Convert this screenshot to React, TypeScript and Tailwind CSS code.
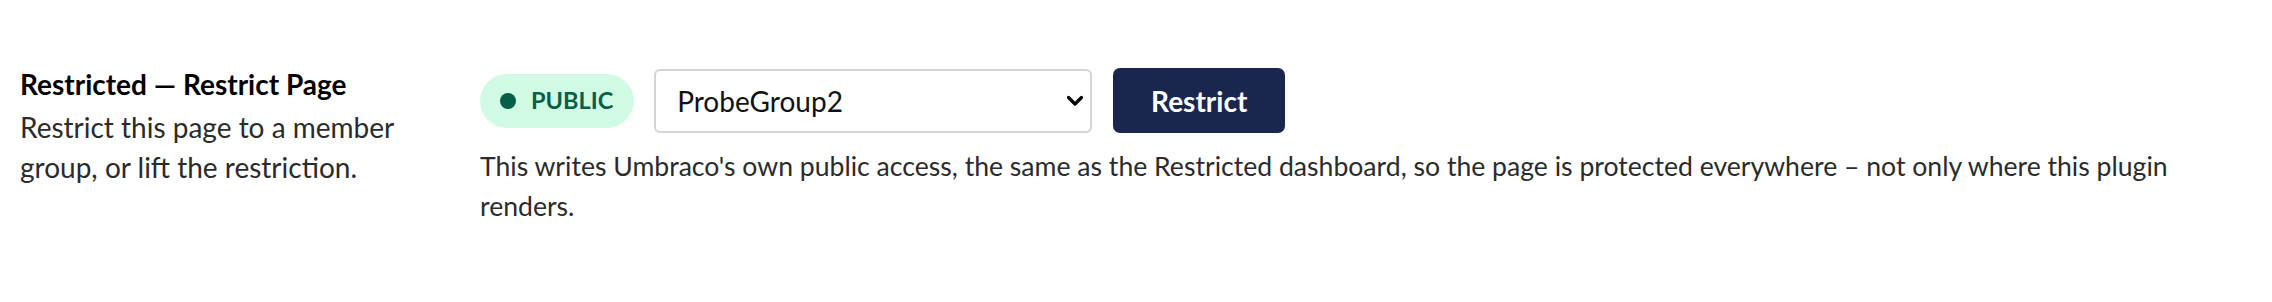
import React, { useState } from 'react';

const font = { fontFamily: 'Lato, "Noto Sans", sans-serif' };

function StatusPill({ label }: { label: string }) {
  return (
    <span className="inline-flex h-[54px] items-center gap-[15px] rounded-full bg-[#d1fae5] pl-[20px] pr-[21px] text-[23.5px] font-bold text-[#065f46]">
      <span className="h-[16px] w-[16px] rounded-full bg-[#065f46]" />
      {label}
    </span>
  );
}

function GroupSelect({
  value,
  options,
  onChange,
}: {
  value: string;
  options: string[];
  onChange: (v: string) => void;
}) {
  return (
    <div className="relative">
      <select
        value={value}
        onChange={(e) => onChange(e.target.value)}
        className="h-[64px] w-[438px] appearance-none rounded-[6px] border-2 border-[#d4d4d4] bg-white pl-[21px] pr-[50px] text-[28px] text-[#111111] outline-none"
      >
        {options.map((o) => (
          <option key={o} value={o}>
            {o}
          </option>
        ))}
      </select>
      {/* chevron */}
      <svg
        className="pointer-events-none absolute right-[8px] top-1/2 h-[12px] w-[18px] -translate-y-1/2"
        viewBox="0 0 18 12"
        fill="none"
      >
        <path
          d="M2.5 2.5 L9 9 L15.5 2.5"
          stroke="#000"
          strokeWidth="3.2"
          strokeLinecap="round"
          strokeLinejoin="round"
        />
      </svg>
    </div>
  );
}

export default function App() {
  const [group, setGroup] = useState('ProbeGroup2');

  return (
    <div className="min-h-[302px] bg-white" style={font}>
      <div className="flex pl-[20px] pr-[50px] pt-[66px]">
        {/* label column */}
        <div className="w-[420px] shrink-0">
          <div className="text-[28px] font-bold leading-[36px] text-[#000000]">
            Restricted — Restrict Page
          </div>
          <p className="mt-[5px] text-[28px] leading-[40px] text-[#2b2b2b]">
            Restrict this page to a member group, or lift the restriction.
          </p>
        </div>

        {/* editor column */}
        <div className="ml-[40px] mt-[2px] min-w-0 flex-1">
          <div className="flex items-center gap-[20px]">
            <StatusPill label="PUBLIC" />
            <GroupSelect
              value={group}
              onChange={setGroup}
              options={['ProbeGroup1', 'ProbeGroup2', 'ProbeGroup3']}
            />
            <button
              type="button"
              className="ml-[1px] h-[65px] w-[172px] rounded-[7px] bg-[#1b264f] text-[28px] font-bold text-white"
            >
              Restrict
            </button>
          </div>
          <p className="mt-[13px] text-[26.6px] leading-[40px] text-[#2b2b2b]">
            This writes Umbraco's own public access, the same as the Restricted
            dashboard, so the page is protected everywhere – not only where
            this plugin renders.
          </p>
        </div>
      </div>
    </div>
  );
}
